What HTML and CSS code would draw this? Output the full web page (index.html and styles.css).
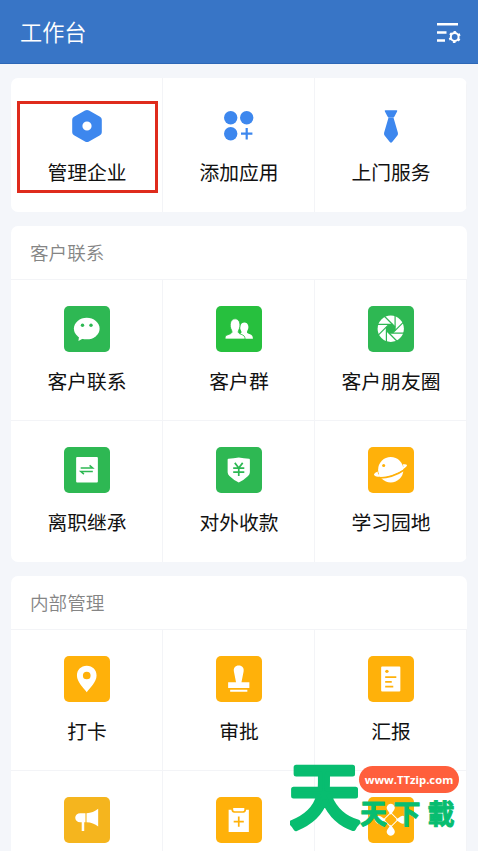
FILE: index.html
```html
<!DOCTYPE html>
<html lang="zh-CN">
<head>
<meta charset="utf-8">
<meta name="viewport" content="width=device-width, initial-scale=1">
<title>工作台</title>
<link rel="stylesheet" href="styles.css">
</head>
<body>
<header class="topbar">
  <h1 class="topbar-title">工作台</h1>
  <svg class="topbar-icon" viewBox="0 0 26 22" fill="none" stroke="#fff">
    <path d="M1 2.200h21M1 10.500h9.500M1 18.500h8" stroke-width="2.500"/>
    <circle cx="18.700" cy="15" r="3.900" stroke-width="2"/>
    <circle cx="18.700" cy="15" r="5" stroke-width="2" stroke-dasharray="2.400 2.836" transform="rotate(-103 18.700 15)"/>
  </svg>
</header>
<main class="content">
  <section class="card shortcuts">
    <div class="grid">
      <a class="cell selected">
        <svg class="glyph" viewBox="0 0 36 36"><path fill="#3d87ee" fill-rule="evenodd" d="M16 2.500Q18 1.500 20 2.500L31 8.700Q32.800 9.800 32.800 11.800V24.200Q32.800 26.200 31 27.300L20 33.500Q18 34.500 16 33.500L5 27.300Q3.200 26.200 3.200 24.200V11.800Q3.200 9.800 5 8.700ZM18 13.400a4.600 4.600 0 1 0 0 9.200a4.600 4.600 0 1 0 0-9.200Z"/></svg>
        <span class="label">管理企业</span>
      </a>
      <a class="cell">
        <svg class="glyph" viewBox="0 0 36 36" fill="#3d87ee"><circle cx="9.700" cy="9.700" r="6.700"/><circle cx="25.700" cy="9.700" r="6.700"/><circle cx="9.700" cy="25.700" r="6.700"/><path d="M25.700 20v11.400M20 25.700h11.400" stroke="#3d87ee" stroke-width="2.200"/></svg>
        <span class="label">添加应用</span>
      </a>
      <a class="cell">
        <svg class="glyph" viewBox="0 0 36 36" fill="#3d87ee"><path d="M12.500 2.200h11q1.200 0 .6 1.400L22 7.400Q21.400 8.500 20.400 9.700h-4.800Q14.600 8.500 14 7.400L11.900 3.600q-.6-1.400.6-1.400ZM15.400 10h5.200l4.300 14.800q.4 1.500-.5 2.600l-5.200 6.700q-1.200 1.300-2.400 0l-5.200-6.700q-.9-1.100-.5-2.600Z"/></svg>
        <span class="label">上门服务</span>
      </a>
    </div>
  </section>

  <section class="card">
    <h2 class="card-title">客户联系</h2>
    <div class="grid">
      <a class="cell">
        <svg class="tile green" viewBox="0 0 45 45"><ellipse cx="22.500" cy="22.300" rx="12.700" ry="10.700" fill="#fff"/><path d="M15 29l-.7 5.500L21 31" fill="#fff"/><circle cx="18.300" cy="19" r="1.700" fill="#2eb853"/><circle cx="26.700" cy="19" r="1.700" fill="#2eb853"/></svg>
        <span class="label">客户联系</span>
      </a>
      <a class="cell">
        <svg class="tile lime" viewBox="0 0 45 45" fill="#fff"><path d="M26 32.500q-.3-3-2.800-4.300c2.100-1.300 2.500-2.200 1.500-4-1.700-3.200-.6-8 3.400-8s5 5 3 8c-1.200 2.200-.3 2.700 2 3.600 2.600 1 3.400 1.900 3.400 4.700Z"/><path d="M9 32.700c0-3.200.6-3.500 4-4.700 2.800-1 3.400-2 2.300-4.200-2.200-3.900-1.600-11.100 3.600-11.100s5.800 7.200 3.600 11.100c-1.100 2.200-.5 3.200 2.300 4.200 2.900 1.100 3.700 1.700 4 4.700Z" stroke="#27c03e" stroke-width=".8"/></svg>
        <span class="label">客户群</span>
      </a>
      <a class="cell">
        <svg class="tile green" viewBox="0 0 45 45"><circle cx="22.500" cy="22.500" r="13" fill="#fff"/><path fill="#2eb853" d="M20.700 18.200h3.600l2.500 2.500v3.600l-2.500 2.500h-3.600l-2.500-2.500v-3.600Z"/><g stroke="#2eb853" stroke-width="1.200"><path d="M26.800 24.300V9"/><path d="M26.800 24.300V9" transform="rotate(45 22.500 22.500)"/><path d="M26.800 24.300V9" transform="rotate(90 22.500 22.500)"/><path d="M26.800 24.300V9" transform="rotate(135 22.500 22.500)"/><path d="M26.800 24.300V9" transform="rotate(180 22.500 22.500)"/><path d="M26.800 24.300V9" transform="rotate(225 22.500 22.500)"/><path d="M26.800 24.300V9" transform="rotate(270 22.500 22.500)"/><path d="M26.800 24.300V9" transform="rotate(315 22.500 22.500)"/></g></svg>
        <span class="label">客户朋友圈</span>
      </a>
      <a class="cell">
        <svg class="tile green" viewBox="0 0 45 45"><rect x="12" y="10" width="21.500" height="25" rx="1" fill="#fff"/><path d="M16.500 20.700h11.800l-3-2.500M28.500 24.300H16.700l3 2.500" fill="none" stroke="#2eb853" stroke-width="1.500"/></svg>
        <span class="label">离职继承</span>
      </a>
      <a class="cell">
        <svg class="tile green" viewBox="0 0 45 45"><path d="M22.500 10.500q5 1.100 10.200 1.100.8 0 .8 1v12.400q0 2-1.800 3.600-3.900 3.800-9.200 6.600-5.300-2.800-9.200-6.600-1.800-1.600-1.800-3.600V12.600q0-1 .8-1 5.200 0 10.200-1.100Z" fill="#fff"/><path d="M18.600 15.700l3.900 5 3.900-5M17 20.900h11M17 24.800h11M22.500 20.700v8" fill="none" stroke="#2eb853" stroke-width="1.700"/></svg>
        <span class="label">对外收款</span>
      </a>
      <a class="cell">
        <svg class="tile amber" viewBox="0 0 45 45"><circle cx="22.500" cy="22.500" r="12.500" fill="#fff"/><path d="M7 30.300Q22 32 37 22" fill="none" stroke="#ffb10a" stroke-width="1.700"/><path d="M9.500 24.200Q6 25.500 5.900 27.200q.2 1.800 4 2.100 10 .2 20-4.600 8.500-4.300 8.700-6.600-.2-1.500-4.100-1l.5 2.500Q28 24.500 21 26.300q-6 1.300-11 .7Z" fill="#fff"/><circle cx="15.500" cy="18.200" r="1.500" fill="#ffb10a"/></svg>
        <span class="label">学习园地</span>
      </a>
    </div>
  </section>

  <section class="card">
    <h2 class="card-title">内部管理</h2>
    <div class="grid">
      <a class="cell">
        <svg class="tile amber" viewBox="0 0 45 45"><path fill="#fff" fill-rule="evenodd" d="M22.500 9.700c5.800 0 9.700 4.200 9.700 9.500 0 6.800-6.600 12-9.700 16.600-3.100-4.600-9.700-9.800-9.700-16.600 0-5.300 3.900-9.500 9.700-9.500ZM22.500 15.500a3.800 3.800 0 1 0 0 7.600a3.800 3.800 0 1 0 0-7.600Z"/></svg>
        <span class="label">打卡</span>
      </a>
      <a class="cell">
        <svg class="tile amber" viewBox="0 0 45 45" fill="#fff"><path d="M22.500 9.500c3.500 0 5.400 2.400 4.800 5.800L25.200 26H33v5.700H12V26h7.800l-2.100-10.700c-.6-3.400 1.300-5.800 4.800-5.800ZM14 33.300h17v2H14Z"/></svg>
        <span class="label">审批</span>
      </a>
      <a class="cell">
        <svg class="tile amber" viewBox="0 0 45 45"><rect x="13" y="10.500" width="19" height="24.500" rx="1" fill="#fff"/><circle cx="18.700" cy="15.200" r="1.700" fill="#ffb10a"/><path d="M17 20.800h11M17 25.500h6.500M17 30.200h8" stroke="#ffb10a" stroke-width="1.700"/></svg>
        <span class="label">汇报</span>
      </a>
      <a class="cell">
        <svg class="tile gold" viewBox="0 0 45 45" fill="#fff"><path d="M16 16h5.200v9H20v8.700h-2.500V25H16a4.900 4.500 0 0 1 0-9ZM22.300 16q6.700-.2 11.500-4.300v17.500Q29 25.200 22.300 25Z"/></svg>
      </a>
      <a class="cell">
        <svg class="tile amber" viewBox="0 0 45 45"><path d="M12.500 12.500h2.700q.3 3 2.800 3h9q2.500 0 2.800-3h2.700V34.500h-20ZM17 10.800h11v1.800q0 1.400-1.400 1.400h-8.200q-1.400 0-1.400-1.400Z" fill="#fff"/><path d="M22.500 19.300v10M17.500 24.300h10" stroke="#ffb10a" stroke-width="1.700"/></svg>
      </a>
      <a class="cell">
        <svg class="tile amber" viewBox="0 0 45 45" fill="#fff"><path d="M22.500 17.500l-3.300-4.700a3.900 3.900 0 1 1 6.600 0Z"/><path d="M22.500 27.500l-3.300 4.700a3.900 3.900 0 1 0 6.600 0Z"/><path d="M17.500 22.500l-4.700-3.300a3.900 3.900 0 1 0 0 6.600Z"/><path d="M27.500 22.500l4.700-3.300a3.900 3.900 0 1 1 0 6.600Z"/><path d="M22.500 15.500l7 7-7 7-7-7Z" fill="none" stroke="#fff"/></svg>
      </a>
    </div>
  </section>
</main>
<aside class="watermark">
  <svg class="mark" viewBox="0 0 172 74">
    <text class="mark-big" x="-1" y="62">天</text>
    <text class="mark-name" x="70 103.500 137.500" y="64">天下載</text>
  </svg>
  <span class="mark-url">www.TTzip.com</span>
</aside>
</body>
</html>
```
FILE: styles.css
```css
*, *::after { box-sizing: border-box; }
html { overflow: hidden; }
body {
  margin: 0;
  height: 851px;
  overflow: hidden;
  position: relative;
  background: #f4f6fa;
  font-family: "Noto Sans CJK SC", sans-serif;
  color: #111;
}
.topbar {
  display: flex;
  align-items: center;
  justify-content: space-between;
  height: 64px;
  padding: 2px 16px 0 20px;
  background: #3875c6;
  border-bottom: 1px solid #2d67b6;
}
.topbar-title {
  margin: 0;
  padding-bottom: 3px;
  font-size: 22.200px;
  line-height: 32px;
  font-weight: 350;
  color: #fff;
}
.topbar-icon { width: 26px; height: 22px; }
.content {
  display: flex;
  flex-direction: column;
  gap: 14px;
  height: 787px;
  overflow: hidden;
  padding: 14px 11px 0;
}
.card {
  width: 456px;
  flex: none;
  background: #fff;
  border-radius: 7px;
  overflow: hidden;
}
.card-title {
  margin: 0;
  height: 54px;
  padding: 0 19px;
  border-bottom: 1px solid #f3f4f7;
  font-size: 18.600px;
  line-height: 51px;
  font-weight: 350;
  color: #858585;
}
.grid {
  display: grid;
  grid-template-columns: repeat(3, 152px);
}
.cell {
  position: relative;
  display: flex;
  flex-direction: column;
  align-items: center;
  gap: 15.500px;
  height: 141px;
  padding: 26.500px 0 0 1px;
  border-right: 1px solid #f3f4f7;
  border-bottom: 1px solid #f3f4f7;
}
.cell:nth-last-child(-n+3) { border-bottom: 0; }
.shortcuts .cell { height: 133.500px; padding-top: 30px; gap: 13.500px; }
.selected::after {
  content: "";
  position: absolute;
  left: 6px;
  top: 23px;
  width: 141px;
  height: 92px;
  border: 3px solid #df2b1c;
}
.glyph { width: 36px; height: 36px; flex: none; }
.tile { width: 45.500px; height: 45.500px; flex: none; border-radius: 5px; }
.green { background: #2eb853; }
.lime { background: #27c03e; }
.amber { background: #ffb10a; }
.gold { background: #f5b51e; }
.label {
  font-size: 19.800px;
  line-height: 28px;
  white-space: nowrap;
}
.watermark {
  position: absolute;
  left: 290px;
  top: 760px;
  width: 172px;
  height: 74px;
}
.mark {
  display: block;
  width: 172px;
  height: 74px;
  fill: #08bd70;
  stroke: #08bd70;
  stroke-linejoin: round;
}
.mark-big {
  font-size: 71px;
  font-weight: 500;
  stroke-width: 5px;
}
.mark-name {
  font-size: 27px;
  font-weight: 700;
  stroke-width: 1px;
}
.mark-url {
  position: absolute;
  left: 69px;
  top: 6px;
  width: 100px;
  height: 27px;
  border-radius: 14px;
  background: #ff5f3c;
  color: #fff;
  font: 700 11.300px/28px "Open Sans", sans-serif;
  text-align: center;
}
```
